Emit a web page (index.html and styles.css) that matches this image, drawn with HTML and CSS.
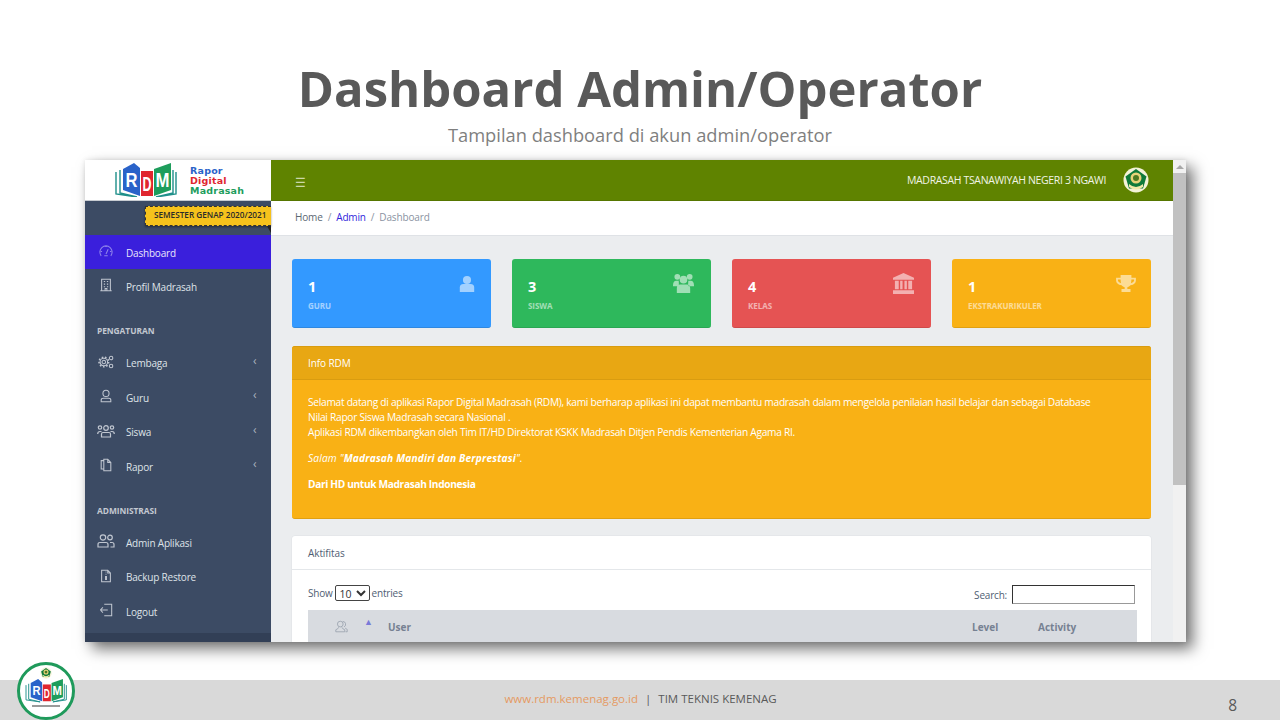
FILE: index.html
```html
<!DOCTYPE html>
<html lang="id">
<head>
<meta charset="utf-8">
<title>Dashboard Admin/Operator</title>
<link rel="stylesheet" href="styles.css">
</head>
<body>
<svg class="defs" width="0" height="0" aria-hidden="true">
  <defs>
    <symbol id="book" viewBox="0 0 67 34">
      <path d="M7 7V30L24 34M3 9V31L24 34M43 34L63 31V9M43 34L60 30V7" fill="none" stroke="#1f8f8a" stroke-width="1.4"/>
      <path d="M10 6L21 0L27 5V33L10 27Z" fill="#2a63c9"/>
      <path d="M28 8H40V33H28Z" fill="#e0262f"/>
      <path d="M41 6L58 0V27L41 33Z" fill="#1e9d5c"/>
      <text x="18.500" y="24" class="lg" textLength="12" lengthAdjust="spacingAndGlyphs">R</text>
      <text x="34" y="28" class="lg" textLength="9" lengthAdjust="spacingAndGlyphs">D</text>
      <text x="49.500" y="24" class="lg" textLength="14" lengthAdjust="spacingAndGlyphs">M</text>
    </symbol>
    <symbol id="crest" viewBox="0 0 26 26">
      <circle cx="13" cy="13" r="12.500" fill="#f4f3d8"/>
      <path d="M13 2L23.500 9.500L20 21.500H6L2.500 9.500Z" fill="#0f7a3a"/>
      <circle cx="13" cy="11" r="5.500" fill="#e7d37a"/>
      <circle cx="13" cy="11" r="3" fill="#4d7a22"/>
      <path d="M6 17Q13 23 20 17V20Q13 25 6 20Z" fill="#f2e9a8"/>
    </symbol>
  </defs>
</svg>

<div class="slide">
  <h1 class="title">Dashboard Admin/Operator</h1>
  <p class="subtitle">Tampilan dashboard di akun admin/operator</p>

  <div class="window">
    <aside class="sidebar">
      <div class="brand">
        <svg class="brand-book"><use href="#book"/></svg>
        <div class="brand-text"><span class="bt-b">Rapor</span><span class="bt-r">Digital</span><span class="bt-g">Madrasah</span></div>
      </div>
      <div class="ribbon-row"></div>
      <nav class="nav">
        <a class="nav-item active">
          <svg class="ni" viewBox="0 0 16 16"><path d="M2.500 13.500A7 7 0 1 1 13.500 13.500M8 11.500L10.500 6M2 8.500H3.500M14 8.500H12.500M8 2V3.500M6 13.500H10"/></svg>Dashboard</a>
        <a class="nav-item">
          <svg class="ni" viewBox="0 0 16 16"><path d="M3 1.500H13V14.500H3ZM1.500 14.500H14.500M5.500 4H7M9 4H10.500M5.500 7H7M9 7H10.500M5.500 10H7M9 10H10.500M7 14.500V12H9V14.500"/></svg>Profil Madrasah</a>
        <div class="nav-title">PENGATURAN</div>
        <a class="nav-item">
          <svg class="ni ni-w" viewBox="0 0 18 16"><circle cx="6.500" cy="8" r="2"/><circle cx="6.500" cy="8" r="4.300"/><circle cx="6.500" cy="8" r="5.500" class="teeth"/><circle cx="14.800" cy="3.500" r="2"/><circle cx="14.800" cy="12.500" r="2"/></svg>Lembaga<span class="chev">‹</span></a>
        <a class="nav-item">
          <svg class="ni" viewBox="0 0 16 16"><circle cx="8" cy="5" r="3.500"/><path d="M2.500 14.500V12.500Q2.500 10.500 5 10.500H11Q13.500 10.500 13.500 12.500V14.500Z"/></svg>Guru<span class="chev">‹</span></a>
        <a class="nav-item">
          <svg class="ni ni-w" viewBox="0 0 18 14"><circle cx="9" cy="4" r="2.300"/><circle cx="3" cy="3.500" r="1.700"/><circle cx="15" cy="3.500" r="1.700"/><path d="M4.500 13V10Q4.500 8.500 6 8.500H12Q13.500 8.500 13.500 10V13ZM.7 10Q.7 7.500 3 7.500H4.500M17.300 10Q17.300 7.500 15 7.500H13.500"/></svg>Siswa<span class="chev">‹</span></a>
        <a class="nav-item">
          <svg class="ni" viewBox="0 0 16 16"><path d="M5.500 3H2.500V12.500H5.500M5.500 1.500H10L13.500 5V14.500H5.500ZM10 1.500V5H13.500"/></svg>Rapor<span class="chev">‹</span></a>
        <div class="nav-title nav-title-b">ADMINISTRASI</div>
        <a class="nav-item">
          <svg class="ni ni-w" viewBox="0 0 18 14"><circle cx="6" cy="3.500" r="2.700"/><circle cx="13" cy="3.500" r="2.300"/><path d="M1 13V10.500Q1 8.500 3 8.500H9Q11 8.500 11 10.500V13ZM13 8.500H15Q17 8.500 17 10.500V13H13.500"/></svg>Admin Aplikasi</a>
        <a class="nav-item">
          <svg class="ni" viewBox="0 0 16 16"><path d="M3 1.500H10L13 4.500V14.500H3ZM10 1.500V4.500H13M7.500 3.500H8.500M7.500 6H8.500M7.500 8.500V12H8.500V8.500Z"/></svg>Backup Restore</a>
        <a class="nav-item">
          <svg class="ni" viewBox="0 0 16 16"><path d="M6 1.500H14.500V14.500H6M1.500 8H10M1.500 8L4.500 5M1.500 8L4.500 11"/></svg>Logout</a>
      </nav>
      <div class="side-foot"></div>
    </aside>

    <div class="body">
      <header class="topbar">
        <span class="burger">☰</span>
        <span class="school">MADRASAH TSANAWIYAH NEGERI 3 NGAWI</span>
        <svg class="crest"><use href="#crest"/></svg>
      </header>
      <div class="crumbs">
        <span>Home</span><i>/</i><a>Admin</a><i>/</i><span class="muted">Dashboard</span>
      </div>
      <main class="main">
        <section class="stats">
          <div class="stat blue">
            <div><div class="num">1</div><div class="lab">GURU</div></div>
            <svg class="si" viewBox="0 0 20 20"><circle cx="10" cy="5.500" r="4.500"/><path d="M2 19V14Q2 10 6 10H14Q18 10 18 14V19Z"/></svg>
          </div>
          <div class="stat green">
            <div><div class="num">3</div><div class="lab">SISWA</div></div>
            <svg class="si si-l" viewBox="0 0 24 22"><circle cx="5.500" cy="4" r="3"/><circle cx="18.500" cy="4" r="3"/><circle cx="12" cy="7" r="4"/><path d="M1 13Q1 8 4.500 8H7Q7.500 11 6.500 14H1ZM23 13Q23 8 19.500 8H17Q16.500 11 17.500 14H23ZM5 21V16Q5 12 8.500 12H15.500Q19 12 19 16V21Z"/></svg>
          </div>
          <div class="stat red">
            <div><div class="num">4</div><div class="lab">KELAS</div></div>
            <svg class="si si-l" viewBox="0 0 24 22"><path d="M12 0L23 5V7H1V5ZM3 8H7V17H3ZM8.500 8H11V17H8.500ZM13 8H15.500V17H13ZM17 8H21V17H17ZM1 18H23V22H1Z"/></svg>
          </div>
          <div class="stat amber">
            <div><div class="num">1</div><div class="lab">EKSTRAKURIKULER</div></div>
            <svg class="si si-t" viewBox="0 0 22 20"><path d="M5 0H17V3H22V6Q22 10 16 11.500Q14.500 13 12.500 13.500V15.500H16V19H6V15.500H9.500V13.500Q7.500 13 6 11.500Q0 10 0 6V3H5ZM2 5V6Q2 8 5.500 9.200Q5 7 5 5ZM20 5H17Q17 7 16.500 9.200Q20 8 20 6Z" fill-rule="evenodd"/></svg>
          </div>
        </section>

        <section class="info">
          <div class="info-head">Info RDM</div>
          <div class="info-body">
            <p>Selamat datang di aplikasi Rapor Digital Madrasah (RDM), kami berharap aplikasi ini dapat membantu madrasah dalam mengelola penilaian hasil belajar dan sebagai Database<br>Nilai Rapor Siswa Madrasah secara Nasional .<br>Aplikasi RDM dikembangkan oleh Tim IT/HD Direktorat KSKK Madrasah Ditjen Pendis Kementerian Agama RI.</p>
            <p><em class="salam">Salam "<strong>Madrasah Mandiri dan Berprestasi</strong>".</em></p>
            <p><strong class="dari">Dari HD untuk Madrasah Indonesia</strong></p>
          </div>
        </section>

        <section class="activity">
          <div class="act-head">Aktifitas</div>
          <div class="act-body">
            <div class="controls">
              <label class="ctl">Show <select class="sel"><option>10</option></select> entries</label>
              <label class="ctl ctl-s">Search: <input class="search" type="text"></label>
            </div>
            <div class="thead">
              <svg class="ti" viewBox="0 0 16 16"><circle cx="6.500" cy="5" r="3.500"/><path d="M1 14.500V12Q4 11 4.500 9M12 14.500H1M8.500 9Q9 11 12 12V14.500M9.500 1.800A3.500 3.500 0 0 1 11 8.500M12.500 10Q15 11 15 12V14.500H13"/></svg>
              <span class="sort">▲</span>
              <span class="th th-user">User</span>
              <span class="th th-level">Level</span>
              <span class="th th-act">Activity</span>
            </div>
          </div>
        </section>
      </main>
    </div>

    <div class="scrollbar"><span class="sb-up"></span><span class="sb-thumb"></span></div>

    <div class="ribbon">SEMESTER GENAP 2020/2021</div>
    <span class="ribbon-fold"></span>
  </div>

  <footer class="footer">
    <span class="url">www.rdm.kemenag.go.id</span>
    <span class="sep">|</span>
    <span class="team">TIM TEKNIS KEMENAG</span>
    <span class="page">8</span>
  </footer>
  <div class="badge">
    <svg class="badge-crest"><use href="#crest"/></svg>
    <svg class="badge-book"><use href="#book"/></svg>
    <span class="badge-line"></span>
  </div>
</div>
</body>
</html>
```
FILE: styles.css
```css
* { box-sizing: border-box; }
html, body { margin: 0; padding: 0; }
body { width: 1280px; height: 720px; overflow: hidden; background: #fff; font-family: "Open Sans", "Noto Sans", sans-serif; }
.defs { position: absolute; }
.slide { position: relative; width: 1280px; height: 720px; display: flex; flex-direction: column; align-items: center; background: #fff; }
.title { margin: 56px 0 0; font-size: 49px; line-height: 64px; font-weight: 700; color: #595959; }
.subtitle { margin: 2px 0 0; font-size: 18.300px; line-height: 26px; color: #7f7f7f; }

.window { position: relative; align-self: flex-start; margin: 12px 0 0 85px; width: 1101px; height: 482px; display: flex; overflow: hidden; background: #ebedef; box-shadow: 7px 7px 14px rgba(0,0,0,.55), 0 0 5px rgba(0,0,0,.1); }
.footer { position: relative; margin-top: auto; width: 100%; height: 40px; background: #d9d9d9; display: flex; justify-content: center; align-items: center; gap: 7px; font-size: 11.500px; color: #595959; padding: 0 0 3px 1px; }
.url { color: #e59a62; }
.sep { color: #595959; }
.page { position: absolute; right: 43px; top: 14px; font-size: 15.500px; color: #595959; }

.sidebar { position: relative; width: 186px; flex: none; background: #3c4b64; display: flex; flex-direction: column; }
.brand { height: 41px; background: #fff; border-bottom: 1px solid #c8ccd2; display: flex; align-items: center; padding-left: 28px; gap: 10px; }
.brand-book { width: 67px; height: 34px; flex: none; }
.brand-text { display: flex; flex-direction: column; font: 700 9.500px/10px "DejaVu Sans", sans-serif; letter-spacing: .2px; padding-top: 2px; }
.bt-b { color: #2a63c9; }
.bt-r { color: #e0262f; }
.bt-g { color: #1e9d5c; }
.lg { font: 700 20px "Liberation Sans", sans-serif; text-anchor: middle; fill: #fff; }
.ribbon-row { height: 34px; }
.nav { display: flex; flex-direction: column; color: #e2e5ea; }
.nav-item { position: relative; height: 34.400px; display: flex; align-items: center; padding: 1px 0 0 41px; font-size: 10px; letter-spacing: -.2px; color: #dfe3e8; }
.nav-item.active { background: #3a1fdc; color: #e9e6fb; }
.ni { position: absolute; left: 14px; top: 9px; width: 14px; height: 14px; fill: none; stroke: #c0c6d0; stroke-width: 1.200; }
.active .ni { stroke: #8f84ea; }
.ni-w { left: 12px; width: 18px; }
.teeth { stroke-width: 1.800; stroke-dasharray: 1.800 2; }
.chev { position: absolute; left: 168px; top: 8px; font-size: 12px; line-height: 14px; color: #aab2bf; }
.nav-title { height: 42px; padding: 20px 0 0 12px; font-size: 8.400px; line-height: 13px; font-weight: 700; color: #c3c8d1; letter-spacing: -.05px; }
.nav-title-b { padding-top: 21px; }
.side-foot { margin-top: auto; height: 9px; background: #323f56; }

.body { flex: 1; min-width: 0; display: flex; flex-direction: column; }
.topbar { height: 41px; flex: none; background: #5f8300; display: flex; align-items: center; padding: 0 24px; color: #f1f4e6; border-bottom: 1px solid #567600; }
.burger { font-size: 12px; line-height: 14px; margin-top: 5px; color: #cbd8a8; }
.school { margin-left: auto; font-size: 10.500px; letter-spacing: -.35px; }
.crest { width: 26px; height: 26px; margin-left: 17px; }
.crumbs { height: 35px; flex: none; background: #fff; border-bottom: 1px solid #dfe2e6; display: flex; align-items: center; gap: 5px; padding: 0 0 2px 24px; font-size: 10px; letter-spacing: -.15px; color: #5c6873; }
.crumbs a { color: #321fdb; }
.crumbs i { font-style: normal; color: #8a93a2; }
.muted { color: #8a93a2; }

.main { flex: 1; min-height: 0; padding: 23px 22px 0 21px; overflow: hidden; }
.stats { display: grid; grid-template-columns: repeat(4, 199px); gap: 21px; height: 69px; }
.stat { position: relative; border-radius: 3px; color: #fff; padding: 18px 16px 0; display: flex; justify-content: space-between; }
.blue { background: #3399ff; border-bottom: 1px solid #2f88e0; }
.green { background: #2eb85c; border-bottom: 1px solid #2aa653; }
.red { background: #e55353; border-bottom: 1px solid #cf4a4a; }
.amber { background: #f9b115; border-bottom: 1px solid #e0a012; }
.num { font-size: 14.500px; line-height: 20px; font-weight: 700; }
.lab { margin-top: 3px; font-size: 8px; line-height: 12px; font-weight: 700; opacity: .55; letter-spacing: -.05px; }
.si { width: 18px; height: 20px; fill: rgba(255,255,255,.55); margin-top: -3px; margin-right: -1px; }
.si-l { width: 23px; height: 21px; margin-top: -4px; margin-right: 0; }
.si-t { width: 20px; height: 18px; margin-top: -2px; }

.info { margin-top: 18px; height: 173px; background: #f9b115; border-radius: 3px; color: #fff; border-bottom: 1px solid #e0a012; display: flex; flex-direction: column; }
.info-head { height: 34px; flex: none; background: #e8a713; border-bottom: 1px solid #d99c10; border-top: 1px solid #d99c10; border-radius: 3px 3px 0 0; padding: 0 16px; font-size: 10px; letter-spacing: -.1px; line-height: 32px; }
.info-body { padding: 15px 16px 0; font-size: 10.200px; line-height: 15px; letter-spacing: -.28px; }
.info-body p { margin: 0 0 11px; }
.salam { letter-spacing: .15px; }
.dari { letter-spacing: -.36px; }

.activity { margin-top: 17px; height: 300px; background: #fff; border-radius: 3px; box-shadow: 0 0 0 .5px #dfe2e6; }
.act-head { height: 34px; border-bottom: 1px solid #e4e7ea; padding: 0 16px; font-size: 10px; letter-spacing: -.1px; line-height: 35px; color: #4f5d73; }
.act-body { padding: 14px 0 0 16px; width: 845px; }
.controls { display: flex; justify-content: space-between; align-items: flex-start; height: 26px; padding-right: 2px; font-size: 10px; letter-spacing: -.2px; color: #4f5d73; }
.ctl { display: flex; align-items: center; gap: 2px; height: 18px; }
.ctl-s { gap: 5px; height: 21px; margin-top: 0; }
.sel { width: 35px; height: 16px; padding: 0; border: 1px solid #444; border-radius: 2px; background: #fff; font: 10.500px "Open Sans", sans-serif; color: #333; }
.search { width: 123px; height: 19px; border: 1px solid #333; border-right-color: #999; border-bottom-color: #999; padding: 0; background: #fff; }
.thead { position: relative; height: 40px; background: #d8dbe0; font-size: 10px; font-weight: 700; color: #768192; }
.ti { position: absolute; left: 27px; top: 10px; width: 13px; height: 13px; fill: none; stroke: #98a0ac; stroke-width: 1; }
.sort { position: absolute; left: 56px; top: 7px; font-size: 9px; line-height: 10px; color: #7a7ad8; }
.th { position: absolute; top: 9px; line-height: 16px; }
.th-user { left: 80px; }
.th-level { left: 664px; }
.th-act { left: 730px; }

.scrollbar { width: 13px; flex: none; background: #f1f1f1; display: flex; flex-direction: column; align-items: center; }
.sb-up { margin-top: 5px; width: 0; height: 0; border: 4px solid transparent; border-top: 0; border-bottom-color: #a8a8a8; }
.sb-thumb { margin-top: 4px; width: 100%; height: 312px; background: #c1c1c1; }

.ribbon { position: absolute; left: 60px; top: 46px; width: 126px; height: 20px; background: #f6c21c; border-top: 1px dashed #333; border-bottom: 1px dashed #333; border-left: 1px dashed #333; font-size: 8.200px; line-height: 16px; font-weight: 600; color: #2a2a2a; padding-left: 8px; white-space: nowrap; box-shadow: 0 1px 2px rgba(0,0,0,.4); }
.ribbon-fold { position: absolute; left: 182px; top: 66px; width: 0; height: 0; border-top: 7px solid #222; border-left: 4px solid transparent; }

.badge { position: absolute; left: 17px; top: 662px; width: 58px; height: 58px; border-radius: 50%; background: #fff; border: 3px solid #1f9a5b; display: flex; flex-direction: column; align-items: center; }
.badge-crest { width: 12px; height: 12px; margin-top: 2px; flex: none; }
.badge-book { width: 45px; height: 27px; margin-top: -2px; flex: none; }
.badge-line { width: 28px; height: 2px; margin-top: 1px; background: #9a9a9a; }
```
